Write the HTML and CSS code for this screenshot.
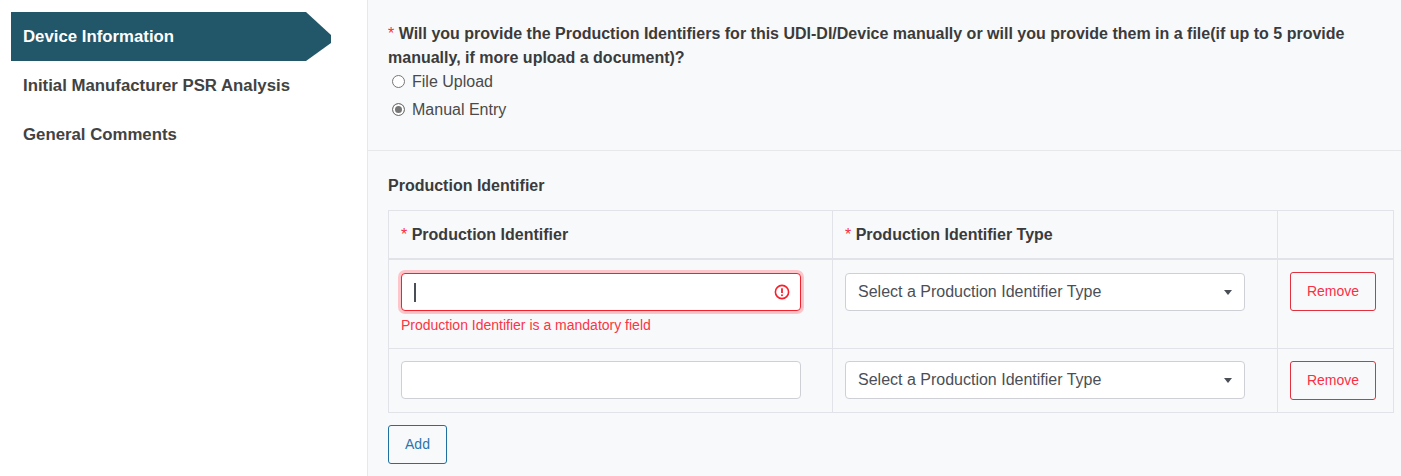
FILE: index.html
```html
<!DOCTYPE html>
<html lang="en">
<head>
<meta charset="utf-8">
<title>Production Identifiers</title>
<link rel="stylesheet" href="styles.css">
</head>
<body>
<div class="page">
  <nav class="side">
    <a class="nav-item active">Device Information</a>
    <a class="nav-item">Initial Manufacturer PSR Analysis</a>
    <a class="nav-item">General Comments</a>
  </nav>
  <main class="main">
    <section class="question">
      <p class="q-label"><span class="req">*</span> Will you provide the Production Identifiers for this UDI-DI/Device manually or will you provide them in a file(if up to 5 provide manually, if more upload a document)?</p>
      <label class="radio"><span class="dot"></span>File Upload</label>
      <label class="radio"><span class="dot on"></span>Manual Entry</label>
    </section>
    <section class="ident">
      <h3 class="ident-title">Production Identifier</h3>
      <table class="grid">
        <colgroup><col class="c1"><col class="c2"><col class="c3"></colgroup>
        <thead>
          <tr>
            <th><span class="req">*</span> Production Identifier</th>
            <th><span class="req">*</span> Production Identifier Type</th>
            <th></th>
          </tr>
        </thead>
        <tbody>
          <tr class="r1">
            <td>
              <div class="input error"><span class="caret"></span>
                <svg class="alert" width="16" height="16" viewBox="0 0 16 16" fill="none"><circle cx="8" cy="8" r="6.6" stroke="#f5222d" stroke-width="1.6"/><path d="M8 4.2v4.8" stroke="#f5222d" stroke-width="1.8"/><circle cx="8" cy="11.3" r="1" fill="#f5222d"/></svg>
              </div>
              <div class="err-msg">Production Identifier is a mandatory field</div>
            </td>
            <td><div class="select">Select a Production Identifier Type<span class="arrow"></span></div></td>
            <td><button class="btn danger">Remove</button></td>
          </tr>
          <tr class="r2">
            <td><div class="input"></div></td>
            <td><div class="select">Select a Production Identifier Type<span class="arrow"></span></div></td>
            <td><button class="btn danger">Remove</button></td>
          </tr>
        </tbody>
      </table>
      <button class="btn add">Add</button>
    </section>
  </main>
</div>
</body>
</html>
```
FILE: styles.css
```css
* { box-sizing: border-box; }
html, body { margin: 0; height: 100%; }
body { font-family: "Liberation Sans", Arial, sans-serif; color: #3b3f46; background: #fff; overflow: hidden; }
.page { display: flex; height: 476px; }
.side { width: 368px; flex: none; padding: 12px 0 0 11px; border-right: 1px solid #e6e8ec; background: #fff; }
.nav-item { display: block; width: 320px; height: 49px; line-height: 50px; padding-left: 12px; font-size: 16.8px; font-weight: 700; color: #424242; }
.nav-item.active { background: #225669; color: #fff; clip-path: polygon(0 0, 295px 0, 320px 23px, 320px 31px, 295px 49px, 0 49px); }
.main { flex: 1; background: #f8f9fb; min-width: 0; }
.question { height: 151px; padding: 22px 20px 0; border-bottom: 1px solid #e6e8ec; }
.q-label { margin: 0; height: 46px; font-size: 16px; line-height: 24px; font-weight: 700; color: #3b3b3b; }
.req { color: #f5303f; font-weight: 400; font-size: 16px; line-height: 1; }
.radio { display: flex; align-items: center; height: 28px; padding-left: 4px; font-size: 16px; color: #4a4a4a; }
.dot { width: 13px; height: 13px; margin-right: 7px; margin-top: -1px; border: 1px solid #767676; border-radius: 50%; background: #fff; flex: none; }
.dot.on { background: #767676; box-shadow: inset 0 0 0 2px #fff; }
.ident { padding: 26px 7px 0 20px; }
.ident-title { margin: 0 0 15px; font-size: 16px; line-height: 18px; font-weight: 700; color: #3b3b3b; }
.grid { width: 1005px; table-layout: fixed; border-collapse: collapse; }
.c1 { width: 444px; }
.c2 { width: 445px; }
.c3 { width: 116px; }
.grid th, .grid td { border: 1px solid #e1e3e8; padding: 12px; vertical-align: top; text-align: left; }
.grid th { height: 48px; padding: 13px 12px 11px; font-size: 16px; font-weight: 700; color: #3b3b3b; vertical-align: middle; border-bottom-width: 2px; }
.r1 td { height: 90px; }
.r2 td { height: 64px; }
.input, .select { position: relative; width: 400px; height: 38px; border: 1px solid #ced0d6; border-radius: 4px; background: #fff; }
.r1 .input, .r1 .select { margin-top: 1px; }
.input.error { border: 1px solid #f5222d; box-shadow: 0 0 0 3px #fdc6ca; }
.caret { position: absolute; left: 12px; top: 9px; width: 2px; height: 19px; background: #4a4f57; }
.alert { position: absolute; right: 10px; top: 10px; }
.err-msg { margin-top: 6px; font-size: 14px; line-height: 17px; color: #fa3545; }
.select { font-size: 16px; line-height: 35px; padding-left: 12px; color: #4a4f57; }
.arrow { position: absolute; right: 12px; top: 16px; border: 4px solid transparent; border-top: 5px solid #4a4f57; border-bottom: 0; }
.btn { display: block; font: 14px "Liberation Sans", Arial, sans-serif; background: transparent; border-radius: 3px; padding: 0 0 2px; }
.danger { width: 86px; height: 39px; color: #fa2f45; border: 1px solid #e2303f; }
.r1 .danger { padding-bottom: 0; }
.add { width: 59px; height: 39px; margin-top: 12px; color: #2a75ad; border: 1px solid #1f6fa0; }
```
